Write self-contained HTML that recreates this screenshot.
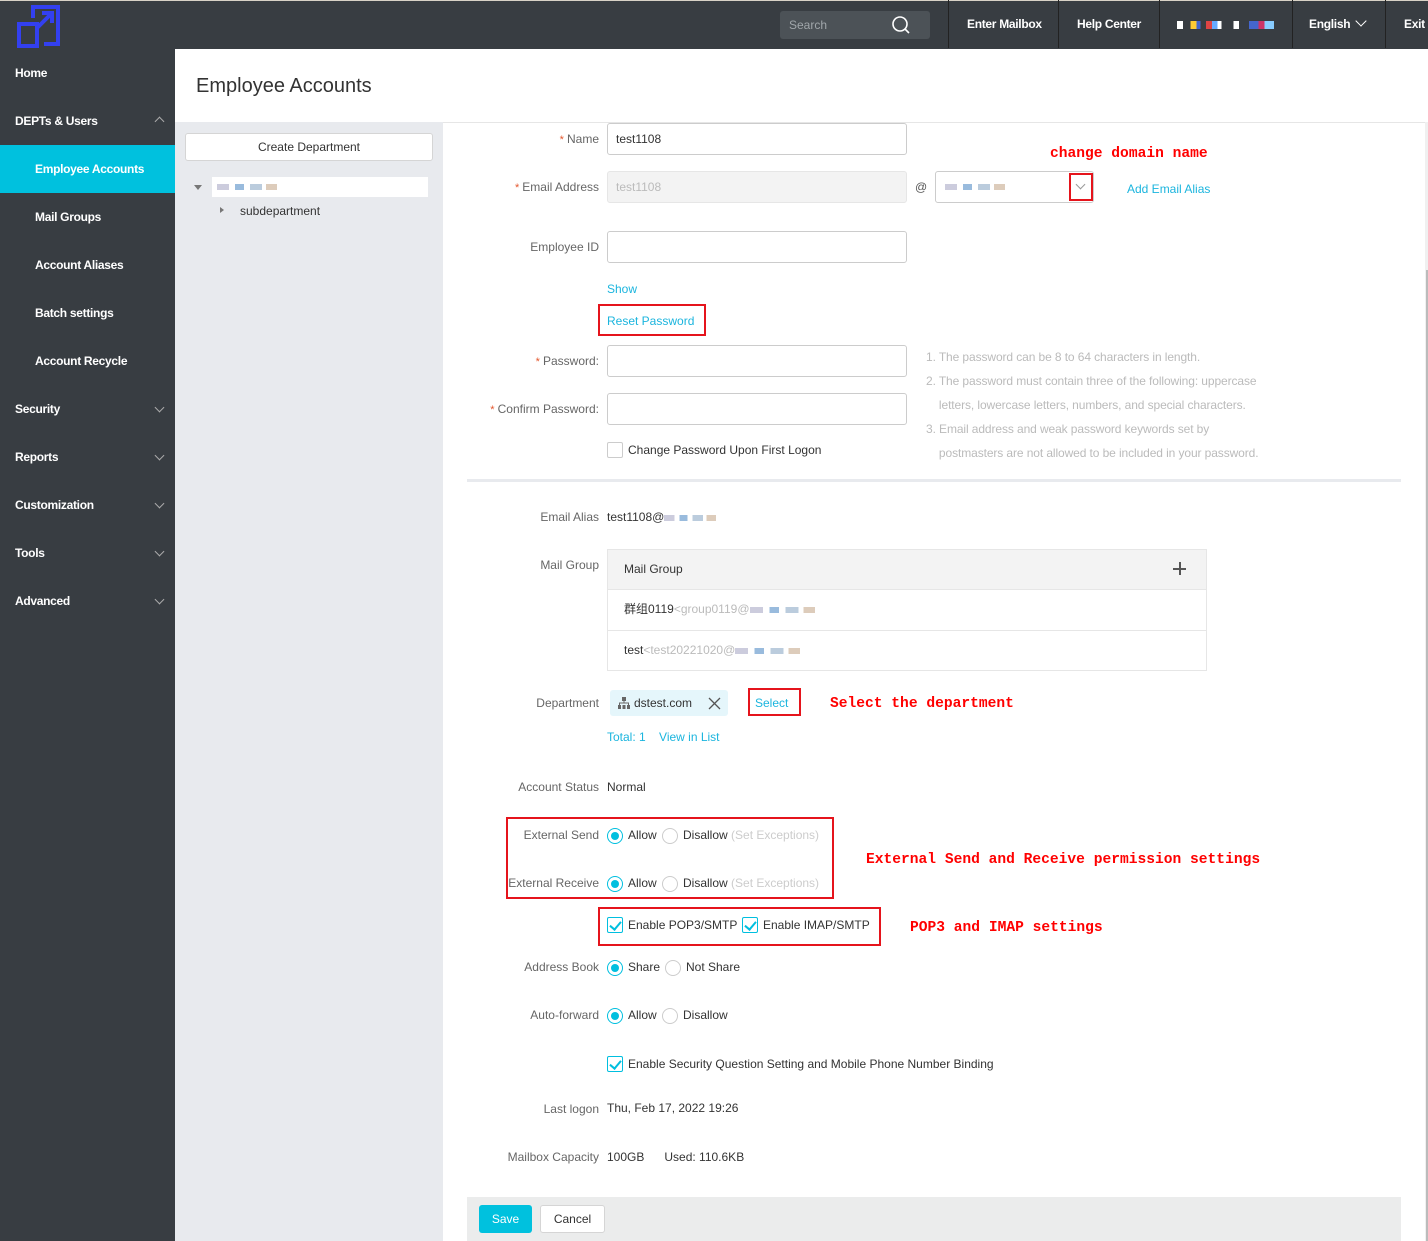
<!DOCTYPE html>
<html><head><meta charset="utf-8"><style>
*{margin:0;padding:0;box-sizing:border-box}
body{width:1428px;height:1241px;position:relative;overflow:hidden;background:#fff;font-family:"Liberation Sans","Noto Sans CJK SC",sans-serif;font-size:12px;color:#333}
.a{position:absolute;white-space:nowrap}
.t{position:absolute;white-space:nowrap;font-size:12px;line-height:14px}
.l{left:430px;width:169px;text-align:right;color:#666}
.req:before{content:"* ";color:#e4572e;font-size:11px}
.in{position:absolute;left:607px;width:300px;height:32px;border:1px solid #ccc;border-radius:3px;background:#fff}
.lk{color:#1bb5de}
.nav{position:absolute;left:15px;color:#fff;font-size:12px;font-weight:bold;line-height:14px;letter-spacing:-0.3px}
.chev{position:absolute;left:156px;width:7px;height:7px;border-right:1px solid #aaa;border-bottom:1px solid #aaa;transform:rotate(45deg)}
.r{position:absolute;width:16px;height:16px;border:1px solid #ccc;border-radius:50%;background:#fff}
.r.on{border-color:#00bfdf}
.r.on:after{content:"";position:absolute;left:3px;top:3px;width:8px;height:8px;border-radius:50%;background:#00bfdf}
.cb{position:absolute;width:16px;height:16px;border:1px solid #ccc;border-radius:2px;background:#fff}
.cb.on{border-color:#00bfdf}
.cb.on:after{content:"";position:absolute;left:4px;top:1px;width:5px;height:9px;border-right:2px solid #00bfdf;border-bottom:2px solid #00bfdf;transform:rotate(40deg)}
.red{position:absolute;border:2px solid #e5141c}
.ann{position:absolute;color:#f00;font-family:"Liberation Mono",monospace;font-weight:bold;font-size:14.6px;line-height:16px;white-space:nowrap}
.sep{position:absolute;top:0;width:1px;height:48px;background:#222}
.hd{position:absolute;top:17px;color:#fff;font-size:12px;font-weight:bold;line-height:14px;letter-spacing:-0.3px}
.blur{display:inline-block;height:6px;vertical-align:middle;background:linear-gradient(90deg,#ccd 0 20%,transparent 20% 30%,#9bd 30% 45%,transparent 45% 55%,#bcd 55% 75%,transparent 75% 82%,#dcb 82%)}
</style></head><body>
<div class="a" style="left:0;top:0;width:1428px;height:49px;background:#383d42"></div>
<div class="a" style="left:0;top:0;width:1428px;height:1px;background:#d8d2c6"></div>
<svg class="a" style="left:17px;top:4px" width="44" height="44" viewBox="0 0 44 44"><g fill="none" stroke="#3340f0" stroke-width="4"><path d="M16 14V3h25v37H27"/><path d="M2 20h18v22H2z"/><path d="M20 24L34 10M25 9h10v10"/></g></svg>
<div class="a" style="left:780px;top:11px;width:150px;height:28px;background:#4c5257;border-radius:3px"></div>
<div class="a" style="left:789px;top:18px;color:#a0a6aa;font-size:12px">Search</div>
<svg class="a" style="left:891px;top:15px" width="20" height="20" viewBox="0 0 20 20"><circle cx="9" cy="9" r="7" fill="none" stroke="#fff" stroke-width="1.6"/><path d="M14 14l4 4" stroke="#fff" stroke-width="1.6"/></svg>
<div class="sep" style="left:948px"></div>
<div class="hd" style="left:967px">Enter Mailbox</div>
<div class="sep" style="left:1058px"></div>
<div class="hd" style="left:1077px">Help Center</div>
<div class="sep" style="left:1159px"></div>
<div class="a" style="left:1177px;top:21px;width:97px;height:8px;background:linear-gradient(90deg,#fff 0 6%,transparent 6% 14%,#fc3 14% 20%,#46c 20% 24%,transparent 24% 30%,#d44 30% 36%,#6af 36% 42%,#fff 42% 46%,transparent 46% 58%,#fff 58% 64%,transparent 64% 74%,#46c 74% 84%,#c36 84% 90%,#8cf 90%)"></div>
<div class="sep" style="left:1292px"></div>
<div class="hd" style="left:1309px">English</div>
<div class="a" style="left:1357px;top:17px;width:8px;height:8px;border-right:1.5px solid #fff;border-bottom:1.5px solid #fff;transform:rotate(45deg)"></div>
<div class="sep" style="left:1385px"></div>
<div class="hd" style="left:1404px">Exit</div>
<div class="a" style="left:0;top:49px;width:175px;height:1192px;background:#383d42"></div>
<div class="nav" style="top:66px">Home</div>
<div class="nav" style="top:114px">DEPTs &amp; Users</div>
<div class="chev" style="top:118px;transform:rotate(225deg)"></div>
<div class="a" style="left:0;top:145px;width:175px;height:48px;background:#00c1de"></div>
<div class="nav" style="left:35px;top:162px">Employee Accounts</div>
<div class="nav" style="left:35px;top:210px">Mail Groups</div>
<div class="nav" style="left:35px;top:258px">Account Aliases</div>
<div class="nav" style="left:35px;top:306px">Batch settings</div>
<div class="nav" style="left:35px;top:354px">Account Recycle</div>
<div class="nav" style="top:402px">Security</div><div class="chev" style="top:404px"></div>
<div class="nav" style="top:450px">Reports</div><div class="chev" style="top:452px"></div>
<div class="nav" style="top:498px">Customization</div><div class="chev" style="top:500px"></div>
<div class="nav" style="top:546px">Tools</div><div class="chev" style="top:548px"></div>
<div class="nav" style="top:594px">Advanced</div><div class="chev" style="top:596px"></div>
<div class="a" style="left:196px;top:75px;font-size:20px;color:#333">Employee Accounts</div>
<div class="a" style="left:175px;top:122px;width:268px;height:1119px;background:#e8eaee"></div>
<div class="a" style="left:443px;top:122px;width:985px;height:1px;background:#e6e6e6"></div>
<div class="a" style="left:185px;top:133px;width:248px;height:28px;background:#fff;border:1px solid #d5d5d5;border-radius:3px;text-align:center;line-height:26px;font-size:12px">Create Department</div>
<div class="a" style="left:194px;top:185px;width:0;height:0;border-left:4px solid transparent;border-right:4px solid transparent;border-top:5px solid #777"></div>
<div class="a" style="left:212px;top:177px;width:216px;height:20px;background:#fff"></div>
<div class="a blur" style="left:217px;top:184px;width:60px"></div>
<div class="a" style="left:220px;top:207px;width:0;height:0;border-top:3px solid transparent;border-bottom:3px solid transparent;border-left:4px solid #777"></div>
<div class="t" style="left:240px;top:204px">subdepartment</div>
<div class="a" style="left:1425px;top:122px;width:3px;height:1119px;background:#f0f0f0"></div>
<div class="a" style="left:1426px;top:270px;width:2px;height:971px;background:#bbb"></div>
<div class="t l req" style="top:132px">Name</div>
<div class="in" style="top:123px"></div><div class="t" style="left:616px;top:132px">test1108</div>
<div class="t l req" style="top:180px">Email Address</div>
<div class="in" style="top:171px;background:#f3f3f3;border-color:#e6e6e6"></div><div class="t" style="left:616px;top:180px;color:#bbb">test1108</div>
<div class="t" style="left:915px;top:180px;color:#555">@</div>
<div class="a" style="left:935px;top:171px;width:159px;height:32px;border:1px solid #ccc;border-radius:3px"></div>
<div class="a blur" style="left:945px;top:184px;width:60px"></div>
<div class="a" style="left:1077px;top:181px;width:7px;height:7px;border-right:1px solid #999;border-bottom:1px solid #999;transform:rotate(45deg)"></div>
<div class="red" style="left:1069px;top:173px;width:24px;height:28px"></div>
<div class="ann" style="left:1050px;top:146px">change domain name</div>
<div class="t lk" style="left:1127px;top:182px">Add Email Alias</div>
<div class="t l" style="top:240px">Employee ID</div>
<div class="in" style="top:231px"></div>
<div class="t lk" style="left:607px;top:282px">Show</div>
<div class="t lk" style="left:607px;top:314px">Reset Password</div>
<div class="red" style="left:598px;top:304px;width:108px;height:32px"></div>
<div class="t l req" style="top:354px">Password:</div>
<div class="in" style="top:345px"></div>
<div class="t l req" style="top:402px">Confirm Password:</div>
<div class="in" style="top:393px"></div>
<div class="cb" style="left:607px;top:442px"></div>
<div class="t" style="left:628px;top:443px">Change Password Upon First Logon</div>
<div class="a" style="left:926px;top:345px;color:#bbb;font-size:12px;line-height:24px;letter-spacing:-0.1px">1. The password can be 8 to 64 characters in length.<br>2. The password must contain three of the following: uppercase<br>&nbsp;&nbsp;&nbsp;&nbsp;letters, lowercase letters, numbers, and special characters.<br>3. Email address and weak password keywords set by<br>&nbsp;&nbsp;&nbsp;&nbsp;postmasters are not allowed to be included in your password.</div>
<div class="a" style="left:467px;top:479px;width:934px;height:3px;background:#e8eaee"></div>
<div class="t l" style="top:510px">Email Alias</div>
<div class="t" style="left:607px;top:510px">test1108@<span class="blur" style="width:52px"></span></div>
<div class="t l" style="top:558px">Mail Group</div>
<div class="a" style="left:607px;top:549px;width:600px;height:122px;border:1px solid #e6e6e6"></div>
<div class="a" style="left:608px;top:550px;width:598px;height:40px;background:#f3f3f3;border-bottom:1px solid #e6e6e6"></div>
<div class="t" style="left:624px;top:562px">Mail Group</div>
<div class="a" style="left:1173px;top:568px;width:13px;height:1.5px;background:#555"></div>
<div class="a" style="left:1179px;top:562px;width:1.5px;height:13px;background:#555"></div>
<div class="t" style="left:624px;top:602px">群组0119<span style="color:#bbb">&lt;group0119@</span><span class="blur" style="width:65px"></span></div>
<div class="a" style="left:608px;top:630px;width:598px;height:1px;background:#e6e6e6"></div>
<div class="t" style="left:624px;top:643px">test<span style="color:#bbb">&lt;test20221020@</span><span class="blur" style="width:65px"></span></div>
<div class="t l" style="top:696px">Department</div>
<div class="a" style="left:610px;top:690px;width:118px;height:26px;background:#e5f6fb;border-radius:3px"></div>
<svg class="a" style="left:618px;top:697px" width="12" height="12" viewBox="0 0 12 12" fill="#666"><rect x="4" y="0" width="4" height="4"/><rect x="5.5" y="4" width="1" height="2"/><rect x="1" y="5.5" width="10" height="1"/><rect x="1" y="6" width="1" height="2"/><rect x="10" y="6" width="1" height="2"/><rect x="0" y="8" width="3" height="4"/><rect x="4.5" y="8" width="3" height="4"/><rect x="9" y="8" width="3" height="4"/></svg>
<div class="t" style="left:634px;top:696px">dstest.com</div>
<svg class="a" style="left:708px;top:697px" width="13" height="13" viewBox="0 0 13 13"><path d="M1 1l11 11M12 1L1 12" stroke="#555" stroke-width="1.3"/></svg>
<div class="t lk" style="left:755px;top:696px">Select</div>
<div class="red" style="left:748px;top:688px;width:53px;height:28px"></div>
<div class="ann" style="left:830px;top:696px">Select the department</div>
<div class="t lk" style="left:607px;top:730px">Total: 1&nbsp;&nbsp;&nbsp;&nbsp;View in List</div>
<div class="t l" style="top:780px">Account Status</div>
<div class="t" style="left:607px;top:780px">Normal</div>
<div class="t l" style="top:828px">External Send</div>
<div class="r on" style="left:607px;top:828px"></div><div class="t" style="left:628px;top:828px">Allow</div>
<div class="r" style="left:662px;top:828px"></div><div class="t" style="left:683px;top:828px">Disallow <span style="color:#ccc">(Set Exceptions)</span></div>
<div class="t l" style="top:876px">External Receive</div>
<div class="r on" style="left:607px;top:876px"></div><div class="t" style="left:628px;top:876px">Allow</div>
<div class="r" style="left:662px;top:876px"></div><div class="t" style="left:683px;top:876px">Disallow <span style="color:#ccc">(Set Exceptions)</span></div>
<div class="red" style="left:506px;top:817px;width:328px;height:82px"></div>
<div class="ann" style="left:866px;top:852px">External Send and Receive permission settings</div>
<div class="cb on" style="left:607px;top:917px"></div><div class="t" style="left:628px;top:918px">Enable POP3/SMTP</div>
<div class="cb on" style="left:742px;top:917px"></div><div class="t" style="left:763px;top:918px">Enable IMAP/SMTP</div>
<div class="red" style="left:598px;top:907px;width:283px;height:39px"></div>
<div class="ann" style="left:910px;top:920px">POP3 and IMAP settings</div>
<div class="t l" style="top:960px">Address Book</div>
<div class="r on" style="left:607px;top:960px"></div><div class="t" style="left:628px;top:960px">Share</div>
<div class="r" style="left:665px;top:960px"></div><div class="t" style="left:686px;top:960px">Not Share</div>
<div class="t l" style="top:1008px">Auto-forward</div>
<div class="r on" style="left:607px;top:1008px"></div><div class="t" style="left:628px;top:1008px">Allow</div>
<div class="r" style="left:662px;top:1008px"></div><div class="t" style="left:683px;top:1008px">Disallow</div>
<div class="cb on" style="left:607px;top:1056px"></div><div class="t" style="left:628px;top:1057px">Enable Security Question Setting and Mobile Phone Number Binding</div>
<div class="t l" style="top:1102px">Last logon</div>
<div class="t" style="left:607px;top:1101px">Thu, Feb 17, 2022 19:26</div>
<div class="t l" style="top:1150px">Mailbox Capacity</div>
<div class="t" style="left:607px;top:1150px">100GB&nbsp;&nbsp;&nbsp;&nbsp;&nbsp;&nbsp;Used: 110.6KB</div>
<div class="a" style="left:467px;top:1197px;width:934px;height:44px;background:#ebecec"></div>
<div class="a" style="left:479px;top:1205px;width:53px;height:28px;background:#00c1de;border-radius:3px;color:#fff;text-align:center;line-height:28px">Save</div>
<div class="a" style="left:540px;top:1205px;width:65px;height:28px;background:#fff;border:1px solid #d5d5d5;border-radius:3px;text-align:center;line-height:26px">Cancel</div>
</body></html>
